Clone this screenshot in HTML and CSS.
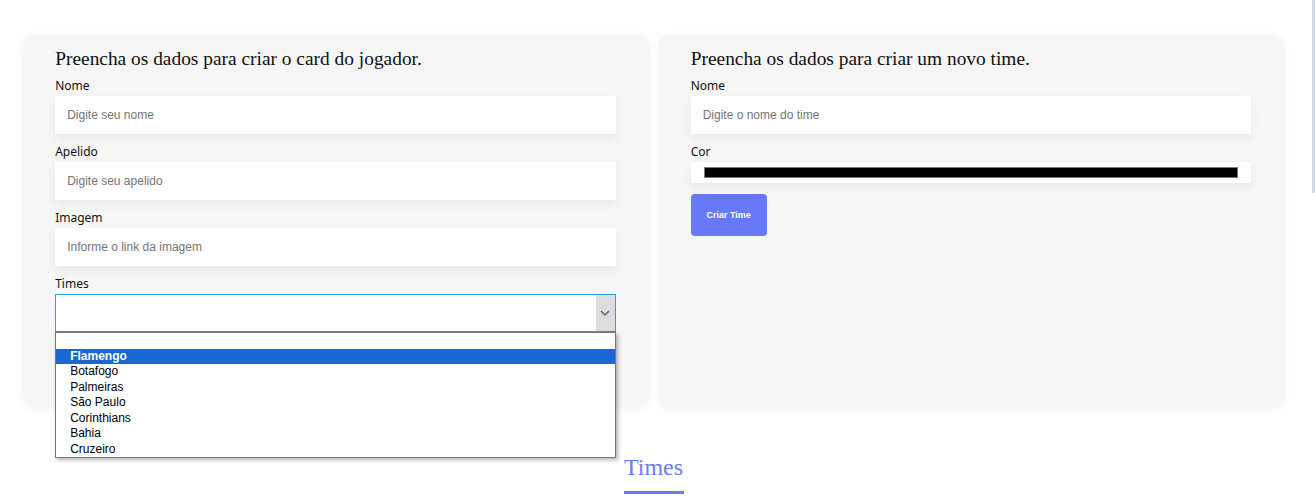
FILE: index.html
```html
<!DOCTYPE html>
<html lang="pt-BR">
<head>
<meta charset="utf-8">
<title>Times</title>
<link rel="stylesheet" href="styles.css">
</head>
<body>
<div class="scroll-thumb"></div>
<main class="page">
  <section class="cards">
    <form class="card">
      <h2 class="card-title">Preencha os dados para criar o card do jogador.</h2>
      <div class="field">
        <label class="label">Nome</label>
        <div class="input placeholder">Digite seu nome</div>
      </div>
      <div class="field">
        <label class="label">Apelido</label>
        <div class="input placeholder">Digite seu apelido</div>
      </div>
      <div class="field">
        <label class="label">Imagem</label>
        <div class="input placeholder">Informe o link da imagem</div>
      </div>
      <div class="field">
        <label class="label">Times</label>
        <div class="select">
          <div class="select-value"></div>
          <div class="select-arrow">
            <svg width="10" height="6" viewBox="0 0 10 6"><path d="M1 1 L5 5 L9 1" fill="none" stroke="#6b6b6b" stroke-width="1.6"/></svg>
          </div>
          <ul class="options">
            <li class="option"></li>
            <li class="option selected">Flamengo</li>
            <li class="option">Botafogo</li>
            <li class="option">Palmeiras</li>
            <li class="option">São Paulo</li>
            <li class="option">Corinthians</li>
            <li class="option">Bahia</li>
            <li class="option">Cruzeiro</li>
          </ul>
        </div>
      </div>
    </form>
    <form class="card">
      <h2 class="card-title">Preencha os dados para criar um novo time.</h2>
      <div class="field">
        <label class="label">Nome</label>
        <div class="input placeholder">Digite o nome do time</div>
      </div>
      <div class="field field-color">
        <label class="label">Cor</label>
        <div class="color-input"><div class="color-swatch"></div></div>
      </div>
      <button type="button" class="btn">Criar Time</button>
    </form>
  </section>
  <section class="teams">
    <h2 class="teams-title">Times</h2>
    <div class="teams-underline"></div>
  </section>
</main>
</body>
</html>
```

FILE: styles.css
```css
* { box-sizing: border-box; }

html, body {
  margin: 0;
  background: #ffffff;
  overflow: hidden;
}

body {
  font-family: "Liberation Sans", Arial, sans-serif;
  color: #111;
}

.scroll-thumb {
  position: fixed;
  top: 0;
  right: 0;
  width: 3px;
  height: 193px;
  background: #d3dce6;
}

.page {
  padding: 35px 32px 0 24px;
}

.cards {
  display: grid;
  grid-template-columns: 1fr 1fr;
  gap: 12px;
}

.card {
  background: #f6f6f6;
  border-radius: 10px;
  box-shadow: 0 2px 8px rgba(0, 0, 0, 0.08);
  padding: 11px 5.1% 0 5%;
  height: 370px;
  margin: 0;
}

.card-title {
  font-family: "Liberation Serif", "Times New Roman", serif;
  font-weight: normal;
  font-size: 19.4px;
  line-height: 26px;
  margin: 0 0 6px;
  color: #111;
}

.field {
  margin-bottom: 10px;
}

.label {
  display: block;
  font-family: "Noto Sans", "Open Sans", sans-serif;
  font-size: 12px;
  line-height: 16px;
  margin-bottom: 2px;
  color: #111;
}

.input {
  width: 100%;
  height: 38px;
  background: #fff;
  box-shadow: 0 4px 10px rgba(0, 0, 0, 0.06);
  display: flex;
  align-items: center;
  padding: 0 12px;
  font-size: 12px;
}

.placeholder {
  color: #757575;
}

.select {
  position: relative;
  width: 100%;
  height: 38px;
  background: #fff;
  border: 1px solid #2a9fd8;
  display: flex;
}

.select-value {
  flex: 1;
}

.select-arrow {
  width: 19px;
  background: #dddddd;
  display: flex;
  align-items: center;
  justify-content: center;
}

.options {
  position: absolute;
  left: -1px;
  right: -1px;
  top: 37px;
  margin: 0;
  padding: 0;
  list-style: none;
  background: #fff;
  border: 1px solid #777;
  box-shadow: 2px 2px 4px rgba(0, 0, 0, 0.3);
  z-index: 5;
}

.option {
  height: 15.5px;
  line-height: 15.5px;
  padding-left: 14px;
  font-size: 12px;
  color: #000;
}

.option.selected {
  background: #1967d2;
  color: #fff;
  font-weight: bold;
}

.field-color {
  margin-bottom: 11px;
}

.color-input {
  width: 100%;
  height: 21px;
  background: #fff;
  box-shadow: 0 4px 10px rgba(0, 0, 0, 0.06);
  padding: 5px 13px;
}

.color-swatch {
  height: 11px;
  background: #000;
  border: 1px solid #777;
}

.btn {
  width: 76px;
  height: 42px;
  border: none;
  border-radius: 4px;
  background: #6779f9;
  color: #fff;
  font-family: "Liberation Sans", Arial, sans-serif;
  font-weight: bold;
  font-size: 9px;
  padding: 0;
}

.teams {
  display: flex;
  flex-direction: column;
  align-items: center;
  margin-top: 47px;
}

.teams-title {
  font-family: "Liberation Serif", "Times New Roman", serif;
  font-weight: normal;
  font-size: 24px;
  line-height: 30px;
  margin: 0;
  color: #6b7bf5;
}

.teams-underline {
  width: 60px;
  height: 3px;
  background: #6b7bf5;
  margin-top: 9px;
}
```
